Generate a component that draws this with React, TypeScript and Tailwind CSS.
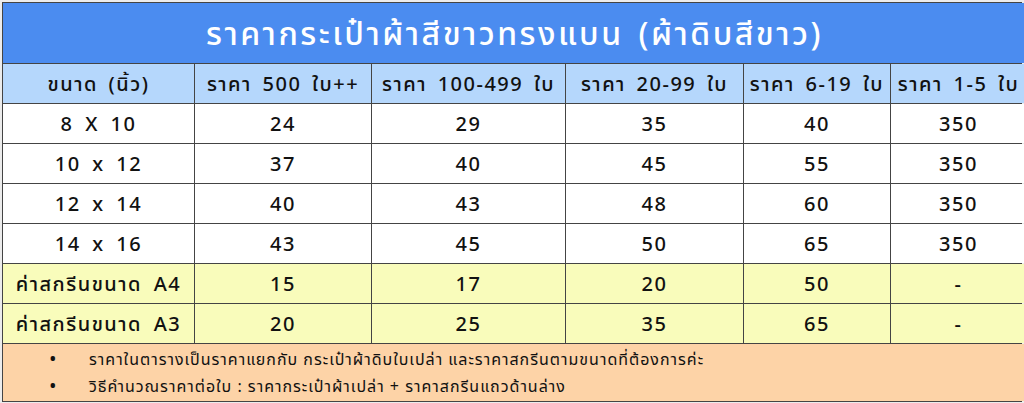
import React from "react";

const rows = [
  ["8 X 10", "24", "29", "35", "40", "350"],
  ["10 x 12", "37", "40", "45", "55", "350"],
  ["12 x 14", "40", "43", "48", "60", "350"],
  ["14 x 16", "43", "45", "50", "65", "350"],
];
const yellowRows = [
  ["ค่าสกรีนขนาด A4", "15", "17", "20", "50", "-"],
  ["ค่าสกรีนขนาด A3", "20", "25", "35", "65", "-"],
];
const headers = ["ขนาด (นิ้ว)", "ราคา 500 ใบ++", "ราคา 100-499 ใบ", "ราคา 20-99 ใบ", "ราคา 6-19 ใบ", "ราคา 1-5 ใบ"];

export default function App() {
  return (
    <div
      className="w-[1024px] h-[403px] bg-[#ececec] pt-[2px] pl-[2px]"
      style={{ fontFamily: '"Noto Sans", "Noto Sans Thai", "Noto Sans CJK SC", sans-serif' }}
    >
      <div className="w-[1020px] border border-[#444] bg-[#444] grid grid-cols-[191px_176px_193px_177px_146px_135px] gap-px">
        <div className="col-span-6 h-[60px] bg-[#4b8cf0] flex items-center justify-center text-white text-[32px] font-medium tracking-[2.5px] [word-spacing:4px] leading-none">
          ราคากระเป๋าผ้าสีขาวทรงแบน (ผ้าดิบสีขาว)
        </div>
        {headers.map((h, i) => (
          <div key={i} className="h-[39px] bg-[#b5d7fc] flex items-center justify-center text-[20px] font-medium tracking-[1.5px] [word-spacing:4px] text-[#111] leading-none">
            {h}
          </div>
        ))}
        {rows.map((r, ri) =>
          r.map((c, ci) => (
            <div key={`${ri}-${ci}`} className="h-[39px] bg-white flex items-center justify-center text-[20px] font-medium tracking-[1.5px] [word-spacing:5px] text-[#111] leading-none">
              {c}
            </div>
          ))
        )}
        {yellowRows.map((r, ri) =>
          r.map((c, ci) => (
            <div key={`y${ri}-${ci}`} className="h-[39px] bg-[#f9fcbb] flex items-center justify-center text-[20px] font-medium tracking-[1.5px] [word-spacing:5px] text-[#111] leading-none">
              {c}
            </div>
          ))
        )}
        <div className="col-span-6 h-[57px] bg-[#fdd3a7] flex flex-col justify-center gap-[7px] text-[16px] tracking-[1px] text-[#111] leading-none">
          <div className="flex items-center">
            <span className="w-[86px] pl-[46px] text-[20px]">•</span>
            <span>ราคาในตารางเป็นราคาแยกกับ กระเป๋าผ้าดิบใบเปล่า และราคาสกรีนตามขนาดที่ต้องการค่ะ</span>
          </div>
          <div className="flex items-center">
            <span className="w-[86px] pl-[46px] text-[20px]">•</span>
            <span>วิธีคำนวณราคาต่อใบ : ราคากระเป๋าผ้าเปล่า + ราคาสกรีนแถวด้านล่าง</span>
          </div>
        </div>
      </div>
    </div>
  );
}
